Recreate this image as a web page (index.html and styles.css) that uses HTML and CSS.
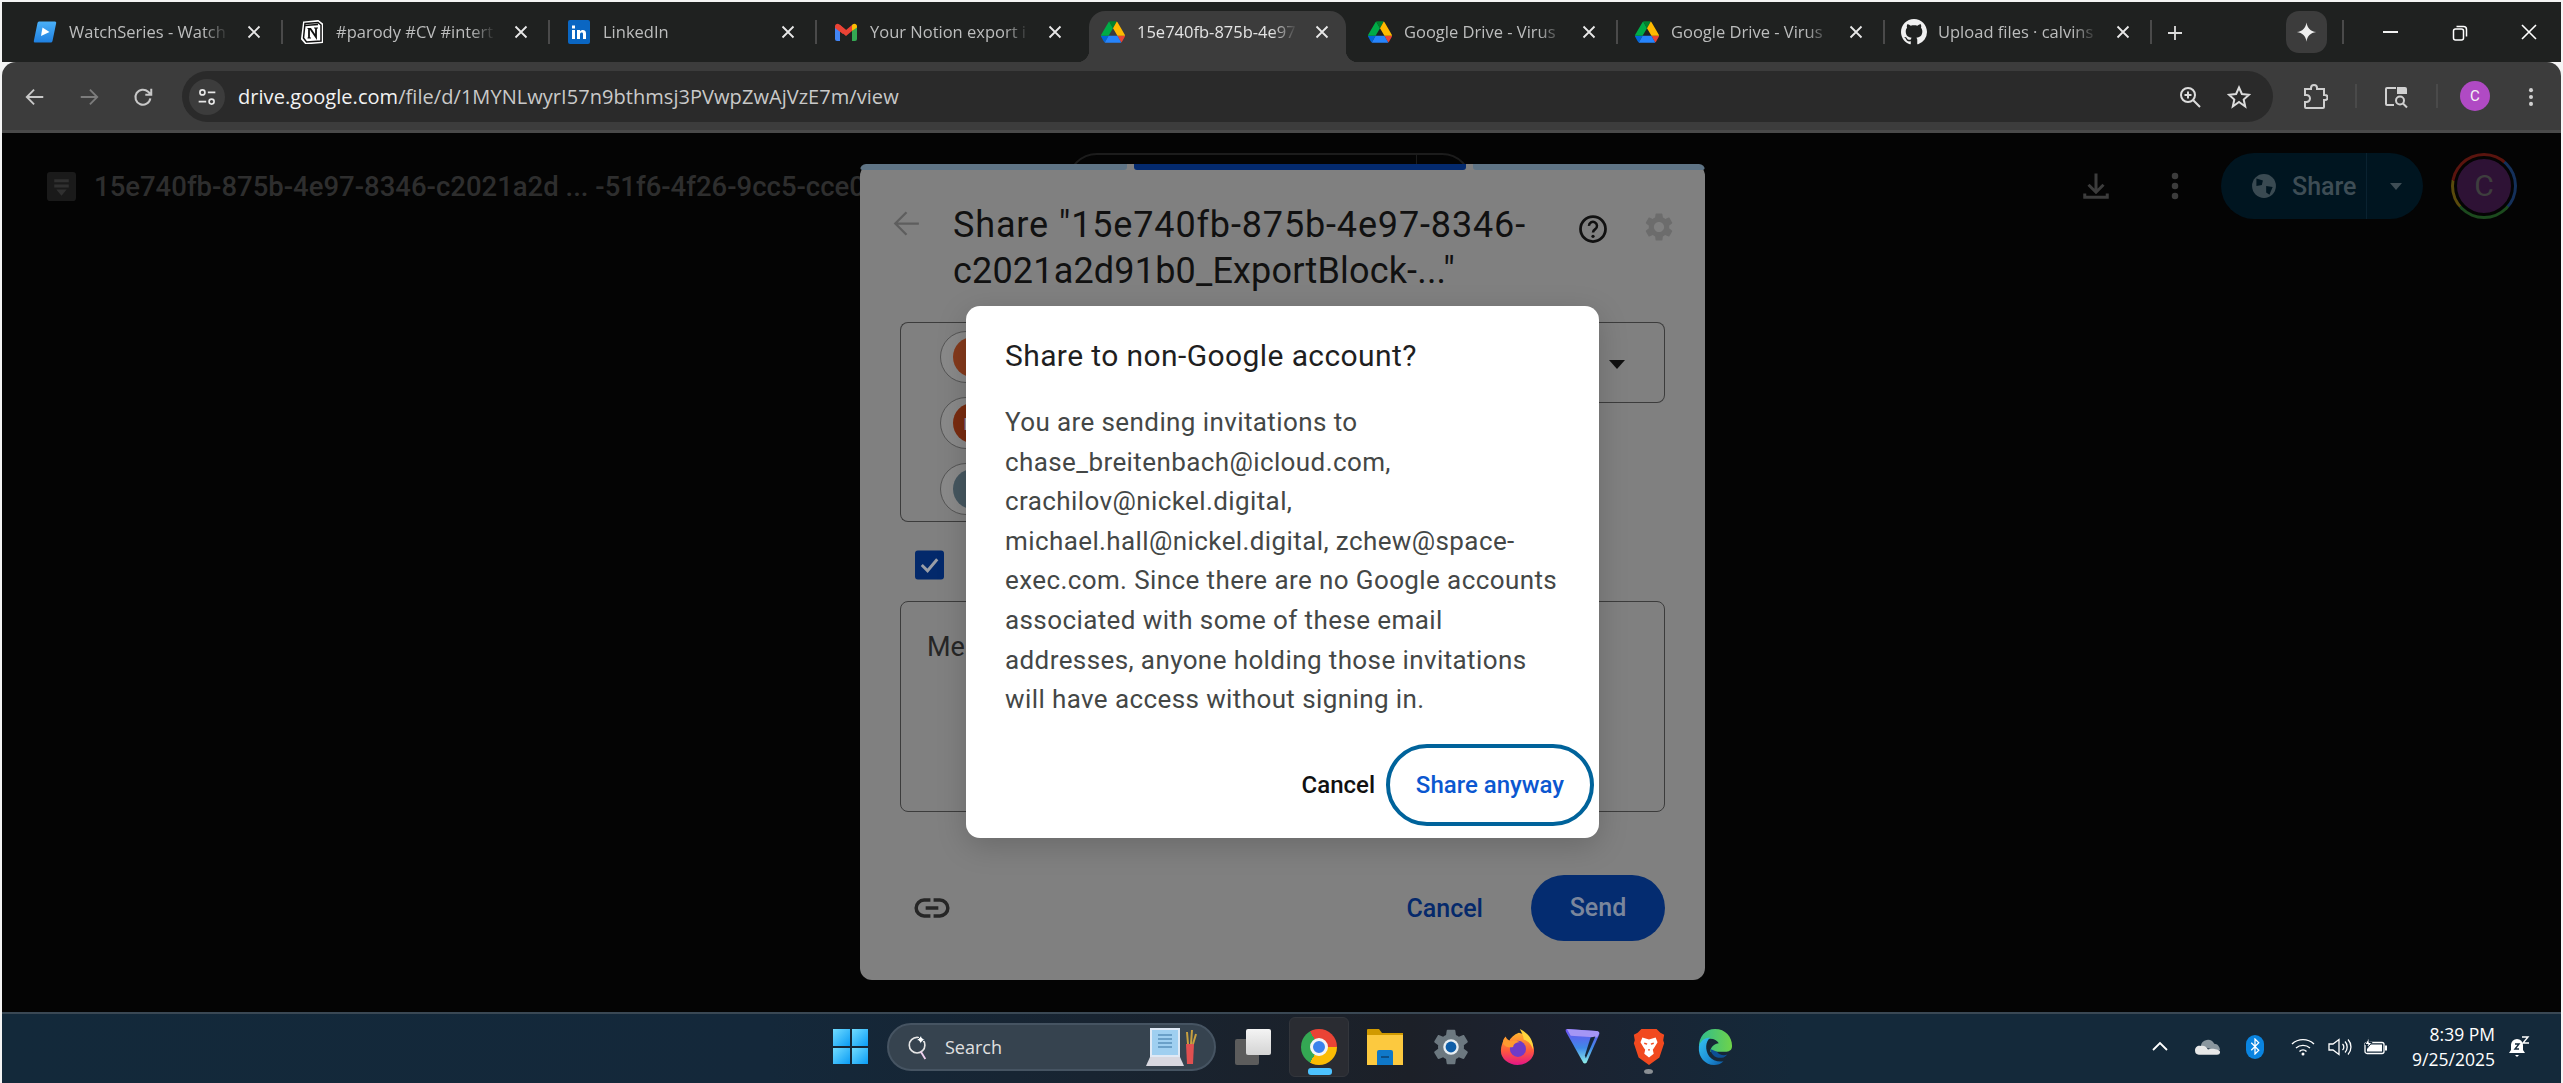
FILE: index.html
```html
<!DOCTYPE html>
<html lang="en">
<head>
<meta charset="utf-8">
<title>Share to non-Google account?</title>
<link rel="stylesheet" href="styles.css">
</head>
<body>
<svg class="defs" width="0" height="0" aria-hidden="true">
  <symbol id="drive" viewBox="0 0 87.3 78">
    <path d="m6.6 66.85 3.85 6.65c.8 1.4 1.95 2.5 3.3 3.3l13.75-23.8h-27.5c0 1.55.4 3.1 1.2 4.5z" fill="#0066da"/>
    <path d="m43.65 25-13.75-23.8c-1.35.8-2.5 1.9-3.3 3.3l-25.4 44a9.06 9.06 0 0 0 -1.2 4.5h27.5z" fill="#00ac47"/>
    <path d="m73.55 76.8c1.35-.8 2.5-1.9 3.3-3.3l1.6-2.75 7.65-13.25c.8-1.4 1.2-2.95 1.2-4.5h-27.502l5.852 11.5z" fill="#ea4335"/>
    <path d="m43.65 25 13.75-23.8c-1.35-.8-2.9-1.2-4.5-1.2h-18.5c-1.6 0-3.15.45-4.5 1.2z" fill="#00832d"/>
    <path d="m59.8 53h-32.3l-13.75 23.8c1.35.8 2.9 1.2 4.5 1.2h50.8c1.6 0 3.15-.45 4.5-1.2z" fill="#2684fc"/>
    <path d="m73.4 26.5-12.7-22c-.8-1.4-1.95-2.5-3.3-3.3l-13.75 23.8 16.15 28h27.45c0-1.55-.4-3.1-1.2-4.5z" fill="#ffba00"/>
  </symbol>
  <symbol id="x" viewBox="0 0 14 14"><path d="M1.5 1.5l11 11M12.5 1.5l-11 11" fill="none" stroke="currentColor" stroke-width="1.8"/></symbol>
  <symbol id="gear" viewBox="0 0 24 24"><path fill-rule="evenodd" d="M19.14 12.94c.04-.3.06-.61.06-.94 0-.32-.02-.64-.07-.94l2.03-1.58c.18-.14.23-.41.12-.61l-1.92-3.32c-.12-.22-.37-.29-.59-.22l-2.39.96c-.5-.38-1.03-.7-1.62-.94l-.36-2.54c-.04-.24-.24-.41-.48-.41h-3.84c-.24 0-.43.17-.47.41l-.36 2.54c-.59.24-1.13.57-1.62.94l-2.39-.96c-.22-.08-.47 0-.59.22L2.74 8.87c-.12.21-.08.47.12.61l2.03 1.58c-.05.3-.09.63-.09.94s.02.64.07.94l-2.03 1.58c-.18.14-.23.41-.12.61l1.92 3.32c.12.22.37.29.59.22l2.39-.96c.5.38 1.03.7 1.62.94l.36 2.54c.05.24.24.41.48.41h3.84c.24 0 .44-.17.47-.41l.36-2.54c.59-.24 1.13-.56 1.62-.94l2.39.96c.22.08.47 0 .59-.22l1.92-3.32c.12-.22.07-.47-.12-.61l-2.01-1.58zM12 15.6c-1.98 0-3.6-1.62-3.6-3.6s1.62-3.6 3.6-3.6 3.6 1.62 3.6 3.6-1.62 3.6-3.6 3.6z"/></symbol>
</svg>

<header class="tabstrip">
  <div class="tab">
    <svg class="favicon" viewBox="0 0 24 24"><defs><linearGradient id="wsg" x1="0" y1="0" x2="0" y2="1"><stop offset="0" stop-color="#4ab0f8"/><stop offset="1" stop-color="#1f80e0"/></linearGradient></defs><path d="M6 1.500h16q1.500 0 1.200 1.500L19.500 21q-.3 1.500-1.800 1.500H2q-1.500 0-1.200-1.500L4.500 3Q4.800 1.500 6 1.500z" fill="url(#wsg)"/><path d="M9.500 7.500l7 4.500-8.500 4z" fill="#fff"/></svg>
    <span class="tab-title">WatchSeries - Watch</span>
    <svg class="tab-x"><use href="#x"/></svg>
  </div>
  <div class="tab">
    <svg class="favicon" viewBox="0 0 24 24"><path d="M4 2.500l14-1.500 4 3v18l-16 1.500L2 19z" fill="#fff" stroke="#fff" stroke-width="2"/><path d="M5 3.500L18 2.500l3 2.500v16l-14.500 1-3-4z" fill="#fff" stroke="#111" stroke-width="1.500"/><path d="M5 5.500l13-1" stroke="#111" stroke-width="1.500"/><path d="M9 9v9M9 9h1.500l5.500 8V8" fill="none" stroke="#111" stroke-width="1.800"/><path d="M7.500 8.500h3.500M14 8h4M7.500 18h3.500" stroke="#111" stroke-width="1.200"/></svg>
    <span class="tab-title">#parody #CV #intert</span>
    <svg class="tab-x"><use href="#x"/></svg>
  </div>
  <div class="tab">
    <svg class="favicon" viewBox="0 0 24 24"><rect x="1" y="0" width="22" height="24" rx="2" fill="#0a66c2"/><path d="M5 10h3v9H5zM5 5.500h3v3H5zM10 10h3v1.500c1-2 6-2.500 6 2V19h-3v-5c0-2-3-2-3 .5V19h-3z" fill="#fff"/></svg>
    <span class="tab-title">LinkedIn</span>
    <svg class="tab-x"><use href="#x"/></svg>
  </div>
  <div class="tab">
    <svg class="favicon" viewBox="0 0 24 24"><path d="M1 6.500V19q0 2 2 2h3V11z" fill="#4285f4"/><path d="M23 6.500V19q0 2-2 2h-3V11z" fill="#34a853"/><path d="M1 6.500C1 3.500 4 3 5.500 4.500L12 10l-3 4-8-6z" fill="#ea4335"/><path d="M6 5l6 5 6-5v6l-6 5-6-5z" fill="#ea4335"/><path d="M23 6.500C23 3.500 20 3 18.500 4.500L18 5v6l5-3.500z" fill="#fbbc04"/></svg>
    <span class="tab-title">Your Notion export i</span>
    <svg class="tab-x"><use href="#x"/></svg>
  </div>
  <div class="tab tab-active">
    <svg class="favicon"><use href="#drive"/></svg>
    <span class="tab-title">15e740fb-875b-4e97</span>
    <svg class="tab-x"><use href="#x"/></svg>
  </div>
  <div class="tab">
    <svg class="favicon"><use href="#drive"/></svg>
    <span class="tab-title">Google Drive - Virus</span>
    <svg class="tab-x"><use href="#x"/></svg>
  </div>
  <div class="tab">
    <svg class="favicon"><use href="#drive"/></svg>
    <span class="tab-title">Google Drive - Virus</span>
    <svg class="tab-x"><use href="#x"/></svg>
  </div>
  <div class="tab">
    <svg class="favicon favicon-gh" viewBox="0 0 16 16"><path fill="#f0f0f0" d="M8 0C3.58 0 0 3.58 0 8c0 3.540 2.290 6.530 5.470 7.590.4.070.55-.170.55-.380 0-.190-.010-.820-.010-1.490-2.010.370-2.530-.490-2.690-.940-.090-.230-.480-.940-.820-1.130-.280-.150-.680-.520-.010-.530.630-.010 1.080.580 1.230.820.720 1.210 1.870.870 2.330.660.070-.520.280-.870.510-1.070-1.780-.2-3.640-.890-3.640-3.950 0-.870.310-1.590.820-2.150-.080-.2-.360-1.020.080-2.120 0 0 .670-.210 2.200.820.640-.180 1.320-.270 2-.270.680 0 1.360.090 2 .270 1.530-1.040 2.200-.820 2.200-.820.440 1.100.160 1.920.080 2.120.510.560.820 1.270.820 2.150 0 3.070-1.870 3.750-3.650 3.950.290.250.540.730.540 1.480 0 1.070-.010 1.930-.010 2.200 0 .210.150.460.55.380A8.013 8.013 0 0016 8c0-4.420-3.580-8-8-8z"/></svg>
    <span class="tab-title">Upload files · calvins</span>
    <svg class="tab-x"><use href="#x"/></svg>
  </div>
  <svg class="new-tab" viewBox="0 0 16 16"><path d="M8 1v14M1 8h14" stroke="currentColor" stroke-width="1.800" fill="none"/></svg>
  <div class="gemini"><svg viewBox="0 0 24 24" class="gemini-star"><path d="M12 1c1 6.500 4.500 10 11 11-6.500 1-10 4.500-11 11-1-6.500-4.500-10-11-11 6.500-1 10-4.500 11-11z" fill="#eee"/></svg></div>
  <span class="vsep"></span>
  <svg class="win-btn win-min" viewBox="0 0 16 16"><path d="M0 8h16" stroke="#fff" stroke-width="2"/></svg>
  <svg class="win-btn win-max" viewBox="0 0 16 16"><rect x="1.500" y="4" width="10" height="11" rx="2" fill="none" stroke="#fff" stroke-width="1.500"/><path d="M4.500 1.500h7q3 0 3 3v7" fill="none" stroke="#fff" stroke-width="1.500"/></svg>
  <svg class="win-btn win-close" viewBox="0 0 16 16"><path d="M1 1l14 14M15 1L1 15" stroke="#fff" stroke-width="1.600"/></svg>
</header>

<nav class="toolbar">
  <svg class="tool" viewBox="0 0 24 24"><path d="M21 12H4M11 4l-8 8 8 8" fill="none" stroke="#c8c8c8" stroke-width="2"/></svg>
  <svg class="tool" viewBox="0 0 24 24"><path d="M3 12h17M13 4l8 8-8 8" fill="none" stroke="#7c7c7c" stroke-width="2"/></svg>
  <svg class="tool" viewBox="0 0 24 24"><path d="M20 13.500a8.200 8.200 0 1 1-2.400-7.200L20.500 9M21 3v6.500h-6.500" fill="none" stroke="#c8c8c8" stroke-width="2.200"/></svg>
  <div class="omnibox">
    <span class="tune"><svg viewBox="0 0 24 24" class="tune-icon"><circle cx="6.500" cy="6.500" r="3" fill="none" stroke="#e6e6e6" stroke-width="2"/><path d="M13 6.500h9M2 17.500h9" stroke="#e6e6e6" stroke-width="2"/><circle cx="17.500" cy="17.500" r="3" fill="none" stroke="#e6e6e6" stroke-width="2"/></svg></span>
    <span class="url"><span class="url-host">drive.google.com</span>/file/d/1MYNLwyrI57n9bthmsj3PVwpZwAjVzE7m/view</span>
    <svg class="omni-icon" viewBox="0 0 24 24"><circle cx="10" cy="10" r="7" fill="none" stroke="#dcdcdc" stroke-width="2"/><path d="M15 15l7 7M10 6.500v7M6.500 10h7" stroke="#dcdcdc" stroke-width="2"/></svg>
    <svg class="omni-icon omni-star" viewBox="0 0 24 24"><path d="M12 2.500l2.900 6.500 7.100.8-5.300 4.700 1.500 7L12 17l-6.200 4.500 1.500-7L2 9.800 9.100 9z" fill="none" stroke="#dcdcdc" stroke-width="2"/></svg>
  </div>
  <svg class="tool tool-ext" viewBox="0 0 26 26"><path d="M3 5h6V4a3 3 0 0 1 6 0v1h7v6h1a2.500 2.500 0 0 1 0 5h-1v7q0 1-1 1H4q-1 0-1-1v-5h1.500a3 3 0 0 0 0-7H3z" fill="none" stroke="#cfcfcf" stroke-width="2"/></svg>
  <span class="vsep vsep-tool"></span>
  <svg class="tool tool-search" viewBox="0 0 26 26"><path d="M11 21H4a1 1 0 0 1-1-1V5a1 1 0 0 1 1-1h9" fill="none" stroke="#d0d0d0" stroke-width="2"/><path d="M14 3h8q2 0 2 2v5H14z" fill="#d0d0d0"/><circle cx="17" cy="16.500" r="4" fill="none" stroke="#d0d0d0" stroke-width="2"/><path d="M20 19.500l4 4" stroke="#d0d0d0" stroke-width="2"/></svg>
  <span class="vsep vsep-tool"></span>
  <span class="profile">C</span>
  <svg class="tool tool-menu" viewBox="0 0 24 24"><circle cx="12" cy="4.500" r="2.200" fill="#d0d0d0"/><circle cx="12" cy="12" r="2.200" fill="#d0d0d0"/><circle cx="12" cy="19.500" r="2.200" fill="#d0d0d0"/></svg>
</nav>

<main class="viewer">
  <div class="viewer-bar">
    <svg class="doc-icon" viewBox="0 0 28 28"><path d="M3 0h22q3 0 3 3v22q0 3-3 3H3q-3 0-3-3V3q0-3 3-3z" fill="#1a1a1a"/><path d="M7 7h14v3H7zM7 12h14v3H7zM9 17h10l-5 6z" fill="#303030"/></svg>
    <span class="doc-name">15e740fb-875b-4e97-8346-c2021a2d ... -51f6-4f26-9cc5-cce0</span>
    <svg class="bar-icon bar-download" viewBox="0 0 24 24"><path d="M12 2v15M6 11l6 6 6-6M3 18v3h18v-3" fill="none" stroke="#3c3c3c" stroke-width="2.400"/></svg>
    <svg class="bar-icon bar-more" viewBox="0 0 24 24"><circle cx="12" cy="4" r="2.600" fill="#3c3c3c"/><circle cx="12" cy="12" r="2.600" fill="#3c3c3c"/><circle cx="12" cy="20" r="2.600" fill="#3c3c3c"/></svg>
    <div class="share-btn">
      <div class="share-main">
        <svg class="globe" viewBox="0 0 24 24"><circle cx="12" cy="12" r="11" fill="#3a4a52"/><path d="M5 5l6 2-1 4-5 1zM14 12l6 1-3 7-3-2z" fill="#001520"/></svg>
        <span>Share</span>
      </div>
      <i class="share-caret"></i>
    </div>
    <span class="user-avatar"><span class="user-avatar-in">C</span></span>
  </div>
  <div class="pager"><i class="pager-div"></i></div>

  <section class="share-modal">
    <div class="progress"><i class="seg seg-left"></i><i class="seg seg-mid"></i><i class="seg seg-right"></i></div>
    <div class="modal-body">
      <div class="modal-head">
        <svg class="modal-back" viewBox="0 0 24 24"><path d="M23 12H2M12 2L2 12l10 10" fill="none" stroke="#5e5e5e" stroke-width="2"/></svg>
        <h2 class="modal-title"><span class="title-l1">Share "15e740fb-875b-4e97-8346-</span><br><span class="title-l2">c2021a2d91b0_ExportBlock-..."</span></h2>
        <svg class="modal-help" viewBox="0 0 24 24"><circle cx="12" cy="12" r="10" fill="none" stroke="#111" stroke-width="2.200"/><path d="M8.800 9.500a3.200 3.200 0 1 1 5 2.600c-1.200.8-1.800 1.400-1.800 2.700" fill="none" stroke="#111" stroke-width="2"/><circle cx="12" cy="17.800" r="1.300" fill="#111"/></svg>
        <svg class="modal-gear"><use href="#gear"/></svg>
      </div>
      <div class="recipients">
        <div class="chips">
          <div class="chip"><span class="chip-av chip-a">z</span></div>
          <div class="chip"><span class="chip-av chip-b">m</span></div>
          <div class="chip"><span class="chip-av chip-c">c</span></div>
        </div>
        <div class="role"><i class="role-caret"></i></div>
      </div>
      <div class="notify"><svg class="check" viewBox="0 0 30 30"><rect width="30" height="30" rx="3" fill="#03296b"/><path d="M7 15l6 6 10-12" fill="none" stroke="#9a9ea6" stroke-width="3"/></svg></div>
      <div class="message">Message</div>
      <div class="modal-foot">
        <svg class="link-icon" viewBox="0 0 24 24"><path d="M11 17H7a5 5 0 0 1 0-10h4M13 7h4a5 5 0 0 1 0 10h-4M8 12h8" fill="none" stroke="#262626" stroke-width="2.200"/></svg>
        <span class="foot-cancel">Cancel</span>
        <span class="send">Send</span>
      </div>
    </div>

    <div class="dialog" role="dialog">
      <h3 class="dialog-title">Share to non-Google account?</h3>
      <p class="dialog-text">You are sending invitations to chase_breitenbach@icloud.com, crachilov@nickel.digital, michael.hall@nickel.digital, zchew@space-exec.com. Since there are no Google accounts associated with some of these email addresses, anyone holding those invitations will have access without signing in.</p>
      <div class="dialog-actions">
        <span class="dlg-cancel">Cancel</span>
        <span class="dlg-share">Share anyway</span>
      </div>
    </div>
  </section>
</main>

<footer class="taskbar">
  <div class="start"><i></i><i></i><i></i><i></i></div>
  <div class="search">
    <svg class="search-glass" viewBox="0 0 24 30"><circle cx="11" cy="13" r="8.500" fill="none" stroke="#e6e6e6" stroke-width="1.800"/><path d="M15 20l5 8" stroke="#f0d0f0" stroke-width="2"/><path d="M15 1c.6 4 2 5.500 6 6-4 .6-5.400 2-6 6-.6-4-2-5.400-6-6 4-.5 5.400-2 6-6z" fill="#fff" stroke="#2a3c4c" stroke-width="1"/></svg>
    <span class="search-text">Search</span>
    <svg class="search-art" viewBox="0 0 52 38"><path d="M4 0h30v29H4z" fill="#dfe9f5"/><path d="M6 2h26v25H6z" fill="#9fcff0"/><path d="M12 7h14M12 11h14M12 15h14M12 19h14" stroke="#6aa0c8" stroke-width="2"/><path d="M4 29h30l4 9H0z" fill="#d8d8e0"/><path d="M40 16h8l-1 20h-6z" fill="#e05050"/><path d="M42 16l-1-12M45 16l1-14M47 16l3-10" stroke="#c8a040" stroke-width="2"/></svg>
  </div>
  <div class="taskview"><i class="tv-back"></i><i class="tv-front"></i></div>
  <div class="task task-active">
    <span class="chrome"><span class="chrome-in"></span></span>
    <i class="task-run"></i>
  </div>
  <div class="task">
    <svg class="app" viewBox="0 0 36 36"><path d="M0 1q0-1 1-1h11l3 4h21v32H0z" fill="#d19a00"/><path d="M0 6h36v30H0z" fill="#fcc93f"/><path d="M10 23q0-2 2-2h12q2 0 2 2v13H10z" fill="#0f78c9"/><path d="M14 27h8v2h-8z" fill="#0b4f88"/></svg>
  </div>
  <div class="task">
    <svg class="app app-gear" viewBox="2.500 2 19 20"><use href="#gear" x="0" y="0" width="24" height="24"/><circle cx="12" cy="12" r="4.300" fill="#e8eef2"/><circle cx="12" cy="12" r="3" fill="#0f5ea8"/></svg>
  </div>
  <div class="task">
    <svg class="app" viewBox="0 0 36 38"><defs><linearGradient id="ffg" x1="0" y1="0" x2="0" y2="1"><stop offset="0" stop-color="#ffb52e"/><stop offset=".55" stop-color="#ff5a3c"/><stop offset="1" stop-color="#e31587"/></linearGradient></defs><path d="M20 4c6 1 16 8 16 19a17.500 15 0 0 1-35 0c0-5 2-10 4-13 1 2 2 3 4 4 2-5 6-8 11-10z" fill="url(#ffg)"/><path d="M21 0c8 4 15 11 14 22-2-6-5-9-10-11 0-4-2-7-4-11z" fill="#ffd53d"/><circle cx="19" cy="21" r="8.500" fill="#6f3bc8"/><path d="M3 15c0-3 1-5 3-7 1 3 3 4 6 5 2-1 6-1 9 1-4 0-7 2-7 5-4 1-9 0-11-4z" fill="#ff9a30"/></svg>
  </div>
  <div class="task">
    <svg class="app" viewBox="0 0 36 38"><defs><linearGradient id="pvg" x1="0" y1="0" x2="0" y2="1"><stop offset="0" stop-color="#6d4ff0"/><stop offset=".55" stop-color="#3f8ae8"/><stop offset="1" stop-color="#8ff0e8"/></linearGradient></defs><path d="M1 0l31 2q4 .5 3 4L22 35q-2 3-4 0L0 3q-1-3 1-3z" fill="url(#pvg)"/><path d="M1 0l31 2q4 .5 3 3l-2 4L5 7z" fill="#a596f5"/><path d="M26 9l5-1-10 23-1-3z" fill="#16283a"/></svg>
  </div>
  <div class="task">
    <svg class="app" viewBox="0 0 32 38"><path d="M8 0h16l4 4 4 2-1 6 1 3-5 15-11 8-11-8L0 15l1-3-1-6 4-2z" fill="#f1491f"/><path d="M9 9l7 2 7-2 2 5-3 5-2 3 1 4-5 4-5-4 1-4-2-3-3-5z" fill="#fff"/><path d="M11 15l3 1M21 15l-3 1M15 22h2" stroke="#f1491f" stroke-width="1.500"/></svg>
    <i class="task-dot"></i>
  </div>
  <div class="task">
    <svg class="app" viewBox="0 0 36 38"><defs><linearGradient id="edg" x1="0" y1="0" x2="1" y2="1"><stop offset="0" stop-color="#35c1f1"/><stop offset=".6" stop-color="#1d8fd6"/><stop offset="1" stop-color="#0c59a4"/></linearGradient><linearGradient id="edh" x1="0" y1="0" x2="1" y2="0"><stop offset="0" stop-color="#2fbc8e"/><stop offset="1" stop-color="#6fd34a"/></linearGradient></defs><path d="M18 0c11 0 18 8 18 18 0 5-4 6-7 6H13c0-5 5-9 9-9-2-4-8-6-13-4C5 13 2 17 1 19 1 8 8 0 18 0z" fill="url(#edh)"/><path d="M1 19c1-6 6-10 12-10-5 4-6 13-1 20 3 4 9 6 15 5-3 3-6 4-10 4C8 38 0 30 1 19z" fill="url(#edg)"/><path d="M13 21c1 6 6 11 14 9 2-1 3-2 4-3-4 2-9 0-11-3z" fill="#0c4f94"/></svg>
  </div>

  <div class="tray">
    <svg class="tray-icon tray-chev" viewBox="0 0 16 16"><path d="M1 11l7-7 7 7" fill="none" stroke="#fff" stroke-width="1.800"/></svg>
    <svg class="tray-cloud" viewBox="0 0 26 16"><path d="M6 7a7.500 7.500 0 0 1 14-2.500c3.500 0 6 3 6 7l-8-1z" fill="#8a969e"/><path d="M0 11.500c0-3 3-5.500 6-4.500 3-1 6 .5 7.500 3.500 4-1.500 12 0 12.500 2.500q.3 3-3 3H4q-4 0-4-4.500z" fill="#e8e8e8"/></svg>
    <span class="bt"><svg viewBox="0 0 12 20" class="bt-icon"><path d="M1.500 5.500l9 9-4.500 4.500V1l4.500 4.500-9 9" fill="none" stroke="#fff" stroke-width="1.500"/></svg></span>
    <svg class="tray-wifi" viewBox="0 0 24 18"><path d="M1 6a16 16 0 0 1 22 0M5 10a10.500 10.500 0 0 1 14 0M8.500 13.500a5 5 0 0 1 7 0" fill="none" stroke="#fff" stroke-width="1.400"/><circle cx="12" cy="16" r="1.500" fill="#fff"/></svg>
    <svg class="tray-vol" viewBox="0 0 24 18"><path d="M1 6h4l6-4.500v15L5 12H1z" fill="none" stroke="#fff" stroke-width="1.300"/><path d="M14.500 6a4 4 0 0 1 0 6M17 3.500a8 8 0 0 1 0 11M20 1.500a11 11 0 0 1 0 15" fill="none" stroke="#fff" stroke-width="1.300"/></svg>
    <svg class="tray-bat" viewBox="0 0 24 18"><rect x="1" y="5" width="19" height="11" rx="2" fill="none" stroke="#fff" stroke-width="1.300"/><path d="M3 7h15v7H3z" fill="#fff"/><path d="M21 8h2v5h-2z" fill="#fff"/><path d="M5 0L1 7h3l-1 4 5-6H5z" fill="#fff" stroke="#14293a" stroke-width="1"/></svg>
    <div class="clock"><span>8:39 PM</span><span>9/25/2025</span></div>
    <svg class="tray-bell" viewBox="0 0 22 22"><path d="M9 3a6 6 0 0 0-6 6v5l-2 3h16l-2-3V9a6 6 0 0 0-6-6z" fill="#fff"/><path d="M7 19h4l-2 2z" fill="#fff"/><path d="M7 8h4l-4 5h4" fill="none" stroke="#14293a" stroke-width="1.400"/><path d="M14 1h6l-5 6h6" fill="none" stroke="#fff" stroke-width="1.400"/></svg>
  </div>
</footer>
</body>
</html>
```

FILE: styles.css
```css
* { box-sizing: border-box; }
html, body { margin: 0; height: 100%; }
body {
  width: 2563px;
  height: 1083px;
  padding: 2px 2px 0;
  overflow: hidden;
  background: #f4f4f4;
  font-family: "Open Sans", "Noto Sans", sans-serif;
  display: flex;
  flex-direction: column;
}
.defs { position: absolute; }
i { display: block; }

/* tab strip */
.tabstrip {
  height: 60px;
  flex: none;
  display: flex;
  align-items: flex-start;
  padding-left: 14px;
  background: #1f2120;
}
.tab {
  position: relative;
  flex: none;
  width: 267px;
  height: 60px;
  padding: 18px 0 0 17px;
  display: flex;
  align-items: flex-start;
  color: #bcbdbd;
}
.tab::after {
  content: "";
  position: absolute;
  right: 0;
  top: 18px;
  width: 2px;
  height: 24px;
  background: #4a4a4a;
}
.tab:nth-child(4)::after { display: none; }
.tab-active { color: #e4e4e4; }
.tab-active::before {
  content: "";
  position: absolute;
  left: 5px;
  right: 5px;
  top: 9px;
  bottom: 0;
  background: #3c3c3c;
  border-radius: 16px 16px 0 0;
}
.tab-active::after {
  left: -7px;
  right: -7px;
  top: auto;
  bottom: 0;
  width: auto;
  height: 12px;
  background:
    radial-gradient(circle at 0 0, transparent 12px, #3c3c3c 12.500px) left bottom / 12px 12px no-repeat,
    radial-gradient(circle at 100% 0, transparent 12px, #3c3c3c 12.500px) right bottom / 12px 12px no-repeat;
}
.favicon { position: relative; flex: none; width: 24px; height: 24px; }
.favicon-gh { width: 26px; height: 26px; margin: -1px -1px 0 -1px; }
.tab-title {
  position: relative;
  width: 160px;
  margin-left: 12px;
  font-size: 16.500px;
  line-height: 24px;
  white-space: nowrap;
  overflow: hidden;
  -webkit-mask-image: linear-gradient(90deg, #000 84%, transparent 100%);
  mask-image: linear-gradient(90deg, #000 84%, transparent 100%);
}
.tab-x {
  position: relative;
  flex: none;
  width: 14px;
  height: 14px;
  margin: 5px 0 0 18px;
  color: #e8e8e8;
}
.new-tab { flex: none; width: 16px; height: 16px; margin: 23px 0 0 15px; color: #dcdcdc; }
.gemini {
  flex: none;
  width: 41px;
  height: 42px;
  margin: 9px 0 0 103px;
  border-radius: 13px;
  background: #3c3c3c;
  display: flex;
  align-items: center;
  justify-content: center;
}
.gemini-star { width: 21px; height: 24px; }
.vsep { flex: none; width: 2px; height: 24px; background: #4a4a4a; margin: 18px 0 0 15px; }
.win-btn { flex: none; }
.win-min { width: 15px; height: 16px; margin: 22px 0 0 39px; }
.win-max { width: 16px; height: 24px; margin: 19px 0 0 54px; }
.win-close { width: 16px; height: 16px; margin: 22px 0 0 53px; }

/* toolbar */
.toolbar {
  flex: none;
  height: 71px;
  display: flex;
  align-items: flex-start;
  padding: 9px 0 0 6px;
  background: #3c3c3c;
  border-bottom: 3px solid #4a4a4a;
  border-radius: 14px 14px 0 0;
}
.tool { flex: none; width: 22px; height: 22px; margin: 15px 16px 0 16px; }
.omnibox {
  flex: none;
  width: 2091px;
  height: 51px;
  margin-left: 12px;
  padding: 0 22px 0 7px;
  display: flex;
  align-items: center;
  background: #2a2a2a;
  border-radius: 26px;
}
.tune {
  flex: none;
  width: 36px;
  height: 36px;
  border-radius: 50%;
  background: #3c3c3c;
  display: flex;
  align-items: center;
  justify-content: center;
}
.tune-icon { width: 20px; height: 20px; }
.url {
  flex: 1;
  margin-left: 13px;
  font-size: 20px;
  letter-spacing: .05px;
  line-height: 26px;
  color: #c9c9c9;
  white-space: nowrap;
}
.url-host { color: #f2f2f2; }
.omni-icon { flex: none; width: 24px; height: 24px; margin-left: 25px; }
.tool-ext { width: 26px; height: 26px; margin: 13px 0 0 29px; }
.vsep-tool { margin: 13px 0 0 27px; }
.tool-search { width: 26px; height: 26px; margin: 13px 0 0 26px; }
.profile {
  flex: none;
  width: 30px;
  height: 30px;
  margin: 10px 0 0 22px;
  border-radius: 50%;
  background: #b04ac4;
  color: #f4f4f4;
  font-family: Roboto, sans-serif;
  font-size: 15px;
  line-height: 30px;
  text-align: center;
}
.tool-menu { margin: 15px 0 0 30px; }

/* viewer */
.viewer {
  position: relative;
  flex: none;
  height: 879px;
  background: #040404;
}
.viewer-bar {
  display: flex;
  align-items: center;
  height: 106px;
  padding: 0 44px 0 45px;
}
.doc-icon { flex: none; width: 29px; height: 29px; }
.doc-name {
  flex: none;
  margin-left: 18px;
  width: 800px;
  font-family: Roboto, sans-serif;
  font-size: 27.500px;
  font-weight: 500;
  color: #2e2e2e;
  white-space: nowrap;
  overflow: hidden;
}
.bar-icon { flex: none; width: 30px; height: 30px; }
.bar-download { margin-left: auto; }
.bar-more { margin-left: 49px; }
.share-btn {
  flex: none;
  width: 202px;
  height: 66px;
  margin-left: 31px;
  display: flex;
  align-items: center;
  border-radius: 33px;
  background: #001520;
  color: #3e4d55;
  font-family: Roboto, sans-serif;
  font-size: 25px;
  font-weight: 500;
}
.share-main {
  flex: none;
  width: 146px;
  height: 66px;
  padding-left: 30px;
  display: flex;
  align-items: center;
  border-right: 1px solid #0a2230;
}
.globe { width: 26px; height: 26px; margin-right: 15px; }
.share-caret {
  margin-left: 23px;
  width: 0;
  height: 0;
  border: 6px solid transparent;
  border-top: 7px solid #3e4d55;
  border-bottom: 0;
}
.user-avatar {
  flex: none;
  width: 66px;
  height: 66px;
  margin-left: 28px;
  padding: 3px;
  border-radius: 50%;
  background: conic-gradient(from -40deg, #5a140e 0 80deg, #14305a 80deg 170deg, #1c4a1e 170deg 270deg, #5a4a0c 270deg 320deg, #5a140e 320deg 360deg);
}
.user-avatar-in {
  display: block;
  width: 60px;
  height: 60px;
  border-radius: 50%;
  border: 3px solid #040404;
  background: #2e1235;
  color: #3e3e3e;
  font-family: Roboto, sans-serif;
  font-size: 30px;
  line-height: 54px;
  text-align: center;
}
.pager {
  position: absolute;
  left: 1065px;
  top: 20px;
  width: 405px;
  height: 60px;
  border: 2px solid #1c1c1c;
  border-radius: 30px;
}
.pager-div { position: absolute; left: 347px; top: 0; width: 1px; height: 60px; background: #1c1c1c; }

/* share modal */
.share-modal {
  position: absolute;
  left: 858px;
  top: 31px;
  width: 845px;
  height: 816px;
  background: #808080;
  border-radius: 12px;
  font-family: Roboto, sans-serif;
}
.progress { display: flex; gap: 7px; height: 6px; border-radius: 12px 12px 0 0; overflow: hidden; }
.seg { height: 6px; border-radius: 0 0 3px 3px; }
.seg-left { flex: none; width: 267px; background: #5f7485; }
.seg-right { flex: 1; background: #5f7485; }
.seg-mid { flex: none; width: 332px; background: #042a6e; }
.modal-body { padding: 0 40px; }
.modal-head { display: flex; align-items: flex-start; height: 152px; padding-top: 32px; }
.modal-back { flex: none; width: 27px; height: 27px; margin: 8px 0 0 -7px; }
.modal-title {
  flex: none;
  width: 610px;
  margin: 0 0 0 33px;
  font-size: 36px;
  line-height: 46px;
  font-weight: 400;
  color: #111;
  white-space: nowrap;
}
.title-l1 { letter-spacing: .85px; }
.title-l2 { letter-spacing: .18px; }
.modal-help { flex: none; width: 30px; height: 30px; margin: 12px 0 0 15px; }
.modal-gear { flex: none; width: 34px; height: 34px; margin: 8px 0 0 34px; fill: #6c6c6c; }
.recipients { display: flex; align-items: flex-start; height: 200px; }
.chips {
  flex: none;
  width: 600px;
  height: 200px;
  padding: 8px 0 0 39px;
  border: 1px solid #3c3c3c;
  border-right: 0;
  border-radius: 8px 0 0 8px;
  display: flex;
  flex-direction: column;
  gap: 14px;
}
.chip {
  width: 300px;
  height: 52px;
  padding: 5px 0 0 12px;
  border: 1px solid #555;
  border-radius: 26px;
  background: #8a8a8a;
}
.chip-av {
  display: block;
  width: 40px;
  height: 40px;
  border-radius: 50%;
  color: #9a9a9a;
  font-size: 22px;
  line-height: 40px;
  text-align: center;
}
.chip-a { background: #853a1c; }
.chip-b { background: #7a2c10; }
.chip-c { background: #465760; }
.role {
  flex: 1;
  height: 81px;
  position: relative;
  border: 1px solid #3c3c3c;
  border-left: 0;
  border-radius: 0 8px 8px 0;
}
.role-caret {
  position: absolute;
  right: 39px;
  top: 37px;
  width: 0;
  height: 0;
  border: 8px solid transparent;
  border-top: 9px solid #111;
  border-bottom: 0;
}
.notify { height: 79px; padding: 28px 0 0 15px; }
.check { display: block; width: 29px; height: 30px; }
.message {
  height: 211px;
  padding: 27px 0 0 26px;
  border: 1px solid #3c3c3c;
  border-radius: 8px;
  font-size: 27px;
  line-height: 36px;
  color: #262626;
}
.modal-foot { display: flex; align-items: center; height: 66px; margin-top: 63px; }
.link-icon { flex: none; width: 38px; height: 38px; margin-left: 13px; }
.foot-cancel { margin-left: auto; font-size: 25px; font-weight: 500; color: #05296b; }
.send {
  flex: none;
  width: 134px;
  height: 66px;
  margin-left: 48px;
  border-radius: 33px;
  background: #042c70;
  color: #7a869c;
  font-size: 25px;
  font-weight: 500;
  line-height: 66px;
  text-align: center;
}

/* dialog */
.dialog {
  position: absolute;
  left: 106px;
  top: 142px;
  width: 633px;
  height: 532px;
  padding: 32px 39px 0;
  background: #fff;
  border-radius: 14px;
  box-shadow: 0 8px 30px rgba(0,0,0,.18);
}
.dialog-title { margin: 0; font-size: 30px; letter-spacing: .4px; line-height: 36px; font-weight: 400; color: #1f1f1f; }
.dialog-text {
  margin: 29px 0 0;
  width: 560px;
  font-size: 26px;
  letter-spacing: .4px;
  line-height: 39.600px;
  color: #444746;
}
.dialog-actions {
  position: absolute;
  right: 5px;
  bottom: 12px;
  display: flex;
  align-items: center;
  font-size: 24px;
}
.dlg-cancel { color: #111; font-weight: 500; margin-right: 11px; }
.dlg-share {
  width: 208px;
  height: 82px;
  line-height: 74px;
  text-align: center;
  color: #0b57d0;
  font-weight: 500;
  border: 4px solid #00639b;
  border-radius: 41px;
}

/* taskbar */
.taskbar {
  flex: none;
  height: 71px;
  display: flex;
  align-items: center;
  padding: 0 0 4px 831px;
  border-top: 2px solid #3a4854;
  background: linear-gradient(90deg, #13293a 0%, #14283a 30%, #1c2028 55%, #1c2230 60%, #14293a 70%, #14293a 100%);
}
.start { flex: none; width: 35px; height: 35px; display: grid; grid-template-columns: 1fr 1fr; gap: 2px; }
.start i { background: linear-gradient(135deg, #71dcff, #0a9cf5); }
.search {
  flex: none;
  width: 329px;
  height: 48px;
  margin-left: 19px;
  padding: 0 16px 0 18px;
  display: flex;
  align-items: center;
  border-radius: 24px;
  background: #36434f;
  border: 2px solid #465462;
}
.search-glass { flex: none; width: 22px; height: 28px; }
.search-text { margin-left: 16px; font-size: 18px; color: #e0e0e0; }
.search-art { flex: none; width: 52px; height: 38px; margin-left: auto; }
.taskview { position: relative; flex: none; width: 36px; height: 36px; margin-left: 19px; }
.tv-back { position: absolute; left: 0; bottom: 0; width: 24px; height: 26px; border-radius: 2px; background: #5c5c5c; }
.tv-front { position: absolute; right: 0; top: 0; width: 25px; height: 26px; border-radius: 2px; background: linear-gradient(#f4f4f4, #d4d4d4); }
.task {
  position: relative;
  flex: none;
  width: 60px;
  height: 60px;
  margin-left: 6px;
  display: flex;
  align-items: center;
  justify-content: center;
}
.task-active { margin-left: 18px; background: #2a2c32; border: 1px solid #33363c; border-radius: 6px; }
.task-run { position: absolute; left: 18px; bottom: 1px; width: 24px; height: 7px; border-radius: 3px; background: #4cc2ff; }
.task-dot { position: absolute; left: 25px; bottom: 3px; width: 9px; height: 5px; border-radius: 50%; background: #8a8f94; }
.chrome {
  width: 36px;
  height: 36px;
  border-radius: 50%;
  display: flex;
  align-items: center;
  justify-content: center;
  background: conic-gradient(from -30deg, #ea4335 0 120deg, #fbbc04 120deg 240deg, #34a853 240deg 360deg);
}
.chrome-in { width: 18px; height: 18px; border-radius: 50%; background: #3b82ec; border: 3px solid #f4f4f4; }
.app { width: 36px; height: 36px; }
.app-gear { fill: #6c7880; }
.tray { display: flex; align-items: center; margin-left: auto; padding-right: 31px; color: #fff; }
.tray-chev { flex: none; width: 16px; height: 16px; }
.tray-cloud { flex: none; width: 25px; height: 16px; margin-left: 27px; }
.bt {
  flex: none;
  width: 18px;
  height: 24px;
  margin-left: 26px;
  border-radius: 9px;
  background: #0a84e0;
  display: flex;
  align-items: center;
  justify-content: center;
}
.bt-icon { width: 10px; height: 17px; }
.tray-wifi { flex: none; width: 24px; height: 18px; margin-left: 27px; }
.tray-vol { flex: none; width: 24px; height: 18px; margin-left: 13px; }
.tray-bat { flex: none; width: 24px; height: 19px; margin-left: 12px; }
.clock {
  flex: none;
  width: 96px;
  margin-left: 11px;
  display: flex;
  flex-direction: column;
  align-items: flex-end;
  font-size: 17.500px;
  line-height: 25px;
}
.tray-bell { flex: none; width: 22px; height: 22px; margin-left: 13px; }
```
